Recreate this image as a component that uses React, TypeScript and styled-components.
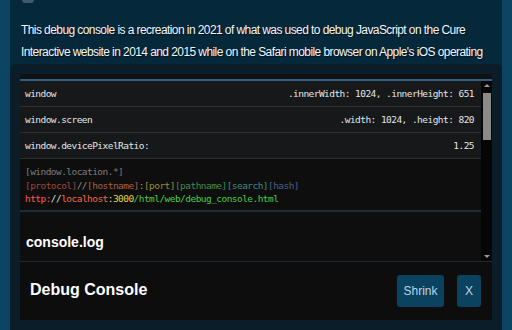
import React from 'react';
import styled, { createGlobalStyle } from 'styled-components';

const GlobalStyle = createGlobalStyle`
  html, body {
    margin: 0;
    padding: 0;
    background: #0b3f5c;
    overflow: hidden;
  }
  * { box-sizing: border-box; }
`;

const Page = styled.div`
  height: 330px;
  padding: 0 10px;
  background: linear-gradient(90deg, #0c4564 0%, #0a3a55 50%, #0c4564 100%);
`;

const Panel = styled.div`
  height: 330px;
  background: #05283b;
  display: flex;
  flex-direction: column;
  overflow: hidden;
`;

const TopNub = styled.div`
  width: 12px;
  height: 3px;
  margin-left: 12px;
  border-radius: 0 0 3px 3px;
  background: #3d5a6e;
`;

const Intro = styled.p`
  margin: 16px 0 1px;
  padding: 0 11px;
  font-family: "Liberation Sans", Arial, sans-serif;
  font-size: 12px;
  letter-spacing: -0.58px;
  line-height: 22px;
  color: #f2f6f8;
  text-shadow: 1px 1px 1px rgba(0, 0, 0, 0.55);
  white-space: nowrap;
`;

const ConsoleBox = styled.div`
  flex: 1;
  background: #0b1d29;
  border-radius: 6px 6px 0 0;
  padding: 10px 10px 10px;
  display: flex;
`;

const ConsoleInner = styled.div`
  flex: 1;
  background: #0e0e0e;
  border-radius: 2px;
  display: flex;
  flex-direction: column;
  height: 246px;
`;

const TopStrip = styled.div`
  height: 5px;
  background: #111;
  border-bottom: 2px solid #2f5f82;
  box-sizing: content-box;
`;

const ScrollArea = styled.div`
  height: 181px;
  display: flex;
  border-bottom: 1px solid #1c2a33;
`;

const ScrollContent = styled.div`
  flex: 1;
  overflow: hidden;
  display: flex;
  flex-direction: column;
`;

const Row = styled.div<{ $h: number }>`
  height: ${p => p.$h}px;
  display: flex;
  align-items: center;
  justify-content: space-between;
  padding: 0 7px 0 5px;
  background: #16181a;
  border-bottom: 1px solid #2c3034;
  font-family: "DejaVu Sans Mono", "Liberation Mono", monospace;
  font-size: 9.5px;
  letter-spacing: -0.55px;
  color: #e4e7ea;
`;

const LocationBlock = styled.div`
  padding: 6px 5px 4px;
  border-bottom: 2px solid #1e2d38;
  font-family: "DejaVu Sans Mono", "Liberation Mono", monospace;
  font-size: 9.5px;
  letter-spacing: -0.55px;
  line-height: 13.5px;
  white-space: nowrap;
`;

const Tok = styled.span<{ $c: string }>`
  color: ${p => p.$c};
`;

const LogTitle = styled.div`
  padding: 22px 6px 0;
  font-family: "Liberation Sans", Arial, sans-serif;
  font-weight: bold;
  font-size: 14px;
  color: #ffffff;
`;

const Scrollbar = styled.div`
  width: 11px;
  background: #060606;
  display: flex;
  flex-direction: column;
  align-items: center;
  padding: 2px 0;
`;

const Arrow = styled.div<{ $down?: boolean }>`
  width: 0;
  height: 0;
  border-left: 3px solid transparent;
  border-right: 3px solid transparent;
  ${p => (p.$down ? 'border-top: 3px solid #9a9a9a;' : 'border-bottom: 3px solid #9a9a9a;')}
  margin: 1px 0;
`;

const Thumb = styled.div`
  width: 8px;
  height: 47px;
  margin-top: 5px;
  background: #8a8a8a;
`;

const Spacer = styled.div`
  flex: 1;
`;

const Footer = styled.div`
  flex: 1;
  display: flex;
  align-items: center;
  padding: 0 11px 0 10px;
  background: #0d0d0d;
`;

const Title = styled.div`
  flex: 1;
  font-family: "Liberation Sans", Arial, sans-serif;
  font-weight: bold;
  font-size: 16px;
  color: #fff;
  padding-bottom: 2px;
`;

const Button = styled.button<{ $w: number }>`
  width: ${p => p.$w}px;
  height: 32px;
  margin-left: 13px;
  border: none;
  border-radius: 3px;
  background: #0b4260;
  color: #bcd4e4;
  font-family: "Liberation Sans", Arial, sans-serif;
  font-size: 12px;
  padding: 0;
`;

const App: React.FC = () => {
  return (
    <>
      <GlobalStyle />
      <Page>
        <Panel>
          <TopNub />
          <Intro>
            This debug console is a recreation in 2021 of what was used to debug JavaScript on the Cure
            <br />
            Interactive website in 2014 and 2015 while on the Safari mobile browser on Apple's iOS operating
          </Intro>
          <ConsoleBox>
            <ConsoleInner>
              <TopStrip />
              <ScrollArea>
                <ScrollContent>
                  <Row $h={26}>
                    <span>window</span>
                    <span>.innerWidth: 1024, .innerHeight: 651</span>
                  </Row>
                  <Row $h={26}>
                    <span>window.screen</span>
                    <span>.width: 1024, .height: 820</span>
                  </Row>
                  <Row $h={26}>
                    <span>window.devicePixelRatio:</span>
                    <span>1.25</span>
                  </Row>
                  <LocationBlock>
                    <div>
                      <Tok $c="#7d7d7d">[window.location.*]</Tok>
                    </div>
                    <div>
                      <Tok $c="#9c4a45">[protocol]</Tok>
                      <Tok $c="#8a8a8a">//</Tok>
                      <Tok $c="#a8604d">[hostname]</Tok>
                      <Tok $c="#999">:</Tok>
                      <Tok $c="#9b8c3e">[port]</Tok>
                      <Tok $c="#3f8c4e">[pathname]</Tok>
                      <Tok $c="#3e8a8a">[search]</Tok>
                      <Tok $c="#4c5e8c">[hash]</Tok>
                    </div>
                    <div>
                      <Tok $c="#ff5a5a">http:</Tok>
                      <Tok $c="#dddddd">//</Tok>
                      <Tok $c="#f46a48">localhost</Tok>
                      <Tok $c="#dddddd">:</Tok>
                      <Tok $c="#e2d442">3000</Tok>
                      <Tok $c="#48cc48">/html/web/debug_console.html</Tok>
                    </div>
                  </LocationBlock>
                  <LogTitle>console.log</LogTitle>
                </ScrollContent>
                <Scrollbar>
                  <Arrow />
                  <Thumb />
                  <Spacer />
                  <Arrow $down />
                </Scrollbar>
              </ScrollArea>
              <Footer>
                <Title>Debug Console</Title>
                <Button $w={47}>Shrink</Button>
                <Button $w={24}>X</Button>
              </Footer>
            </ConsoleInner>
          </ConsoleBox>
        </Panel>
      </Page>
    </>
  );
};

export default App;
